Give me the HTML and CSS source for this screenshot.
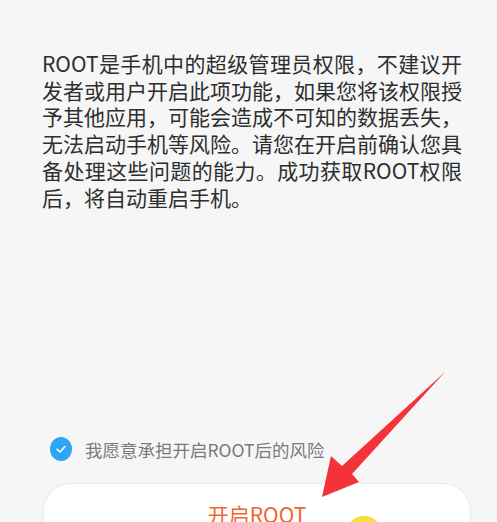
FILE: index.html
```html
<!DOCTYPE html>
<html lang="zh-CN">
<head>
<meta charset="utf-8">
<title>ROOT</title>
<link rel="stylesheet" href="styles.css">
</head>
<body>
<div class="page">
  <p class="notice">ROOT是手机中的超级管理员权限，不建议开发者或用户开启此项功能，如果您将该权限授予其他应用，可能会造成不可知的数据丢失，无法启动手机等风险。请您在开启前确认您具备处理这些问题的能力。成功获取ROOT权限后，将自动重启手机。</p>
  <div class="agree">
    <span class="check">
      <svg viewBox="0 0 24 24" width="12" height="12"><path d="M4 12.5 L10 18 L20 7" fill="none" stroke="#fff" stroke-width="3.2" stroke-linecap="round" stroke-linejoin="round"/></svg>
    </span>
    <span class="agree-text">我愿意承担开启ROOT后的风险</span>
  </div>
  <div class="button">开启ROOT</div>
  <svg class="arrow" viewBox="0 0 497 522" width="497" height="522">
    <path d="M445 372 L352 474 L359 482 L322 497 L331 456 L342 466 Z" fill="#f4323a"/>
  </svg>
  <div class="touch"></div>
</div>
</body>
</html>
```
FILE: styles.css
```css
html, body {
  margin: 0;
  padding: 0;
}
body {
  background: #f6f6f6;
  font-family: "Noto Sans CJK SC", "Noto Sans", sans-serif;
  overflow: hidden;
}
.page {
  position: relative;
  width: 497px;
  height: 522px;
  overflow: hidden;
}
.notice {
  margin: 50px 0 0 42px;
  width: 420px;
  font-size: 21px;
  line-height: 26.7px;
  color: #2e2e2e;
  text-align: justify;
}
.agree {
  display: flex;
  align-items: center;
  gap: 13px;
  margin: 226px 0 0 50px;
  height: 26px;
}
.check {
  width: 22px;
  height: 24px;
  border-radius: 50%;
  background: #2ea6f4;
  display: flex;
  align-items: center;
  justify-content: center;
}
.check svg {
  display: block;
}
.agree-text {
  font-size: 17.5px;
  color: #7a7a7a;
}
.button {
  margin: 21px 0 0 43px;
  width: 428px;
  height: 62px;
  box-sizing: border-box;
  border: 1px solid #ebebeb;
  border-radius: 28px;
  background: #ffffff;
  display: flex;
  align-items: center;
  justify-content: center;
  font-size: 21px;
  color: #f2662c;
}
.arrow {
  position: absolute;
  left: 0;
  top: 0;
}
.touch {
  position: absolute;
  left: 346px;
  top: 516px;
  width: 36px;
  height: 36px;
  border-radius: 50%;
  background: #f3e03c;
}
```
